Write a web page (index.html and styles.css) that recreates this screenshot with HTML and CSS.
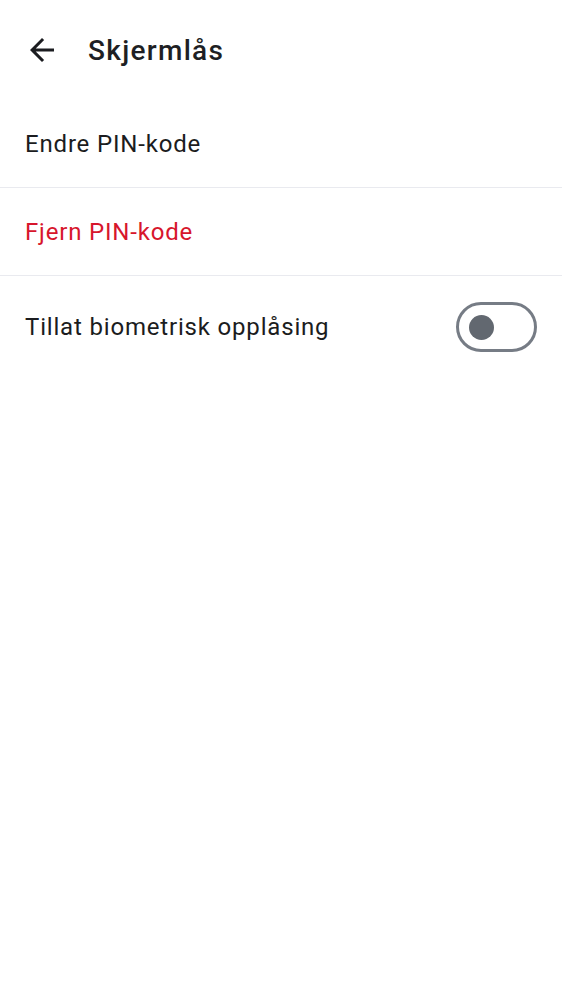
FILE: index.html
```html
<!DOCTYPE html>
<html lang="no">
<head>
<meta charset="utf-8">
<link rel="stylesheet" href="styles.css">
</head>
<body>
<header class="topbar">
  <button class="back" aria-label="Tilbake">
    <svg viewBox="0 0 24 24" width="36" height="36"><path d="M20 11H7.83l5.59-5.59L12 4l-8 8 8 8 1.41-1.41L7.83 13H20v-2z" fill="#1b1c20"/></svg>
  </button>
  <h1 class="title">Skjermlås</h1>
</header>
<main class="list">
  <div class="row">Endre PIN-kode</div>
  <div class="row danger">Fjern PIN-kode</div>
  <div class="row toggle-row">
    <span>Tillat biometrisk opplåsing</span>
    <span class="switch"><span class="thumb"></span></span>
  </div>
</main>
</body>
</html>
```
FILE: styles.css
```css
* { box-sizing: border-box; }
html, body { margin: 0; padding: 0; background: #fff; }
body { font-family: Roboto, "Noto Sans", sans-serif; color: #1b1c20; }
.topbar { height: 100px; display: flex; align-items: center; padding-left: 24px; }
.back { width: 36px; height: 36px; padding: 0; border: 0; background: none; display: flex; }
.title { margin: 0 0 0 28px; font-size: 28px; font-weight: 500; letter-spacing: 1.3px; color: #1e1f24; }
.list { display: flex; flex-direction: column; }
.row { height: 88px; display: flex; align-items: center; padding: 0 25px; font-size: 24px; letter-spacing: 0.82px; border-bottom: 1.5px solid #e9eaef; }
.row.danger { color: #d7162c; }
.toggle-row { border-bottom: 0; height: 102px; justify-content: space-between; padding-right: 25px; }
.switch { width: 81px; height: 50px; border: 3px solid #767c85; border-radius: 25px; display: flex; align-items: center; padding-left: 10px; }
.thumb { width: 25px; height: 25px; border-radius: 50%; background: #626870; }
```
